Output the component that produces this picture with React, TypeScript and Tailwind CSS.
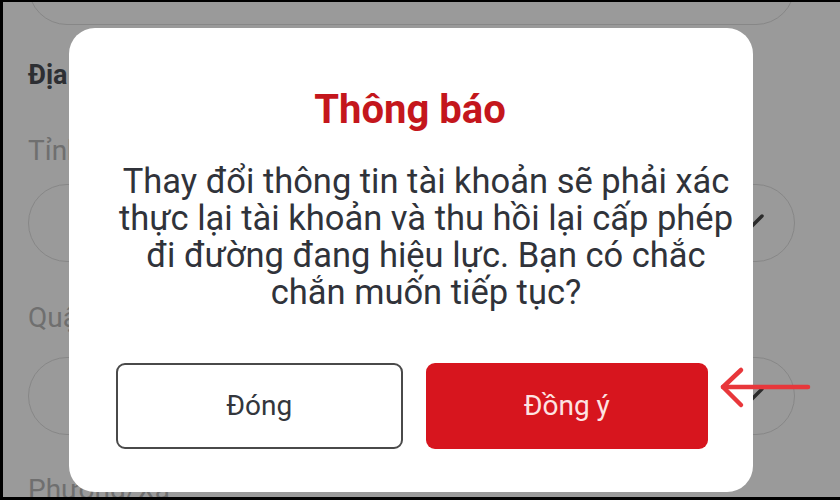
import React from "react";

function Chevron() {
  return (
    <svg width="32" height="20" viewBox="0 0 32 20" fill="none">
      <path d="M3 3 L16 16 L29 3" stroke="#2b2b2b" strokeWidth="3.5" strokeLinecap="round" strokeLinejoin="round" />
    </svg>
  );
}

export default function App() {
  return (
    <div
      className="relative w-[840px] h-[500px] overflow-hidden bg-[#9a9a9a] border-l-[3px] border-t-[2px] border-b-[3px] border-black"
      style={{ fontFamily: "Roboto, 'Noto Sans', sans-serif" }}
    >
      {/* background form (dimmed) */}
      <div className="flex flex-col pl-[25px] pr-[45px]">
        <div className="mt-[-55px] h-[78px] rounded-full border-[1.5px] border-[#878787] flex items-center justify-end pr-[90px]">
          <div className="w-[30px] h-[30px] rounded-full border-[3px] border-[#2e2e2e] mt-[-12px]" />
        </div>
        <div className="mt-[33px] text-[27px] leading-[34px] font-bold text-[#2d2f33]">Địa chỉ liên hệ</div>
        <div className="mt-[42px] text-[28px] leading-[34px] text-[#6f6f6f]">Tỉnh/Thành phố</div>
        <div className="mt-[16px] h-[78px] rounded-full border-[1.5px] border-[#878787] flex items-center justify-end pr-[29px]">
          <Chevron />
        </div>
        <div className="mt-[39px] text-[28px] leading-[34px] text-[#6f6f6f]">Quận/Huyện</div>
        <div className="mt-[22px] h-[78px] rounded-full border-[1.5px] border-[#878787] flex items-center justify-end pr-[29px]">
          <Chevron />
        </div>
        <div className="mt-[38px] text-[28px] leading-[34px] text-[#6f6f6f]">Phường/Xã</div>
      </div>

      {/* modal */}
      <div className="absolute left-[66px] top-[26px] w-[684px] h-[464px] rounded-[26px] bg-white flex flex-col pt-[59px] pl-[47px] pr-[45px] pb-[43px]">
        <div className="text-[40px] leading-[46px] font-bold text-[#c4161c] text-center ml-[-4px]">Thông báo</div>
        <div className="mt-[30px] ml-[-12px] mr-[-40px] text-[34.5px] leading-[37px] text-[#30333a] text-center">
          Thay đổi thông tin tài khoản sẽ phải xác
          <br />
          thực lại tài khoản và thu hồi lại cấp phép
          <br />
          đi đường đang hiệu lực. Bạn có chắc
          <br />
          chắn muốn tiếp tục?
        </div>
        <div className="mt-auto flex gap-[23px] w-full">
          <button className="flex-1 h-[86px] rounded-[9px] border-[2px] border-[#4a4a4a] bg-white text-[28px] text-[#33363c] flex items-center justify-center">
            Đóng
          </button>
          <button className="flex-1 h-[86px] rounded-[9px] bg-[#d7151e] text-[28px] text-[#fde3e3] flex items-center justify-center">
            Đồng ý
          </button>
        </div>
      </div>

      {/* annotation arrow */}
      <svg className="absolute left-[712px] top-[362px]" width="100" height="50" viewBox="0 0 100 50" fill="none">
        <path d="M8 23 L93 23" stroke="#e8373b" strokeWidth="4.5" strokeLinecap="round" />
        <path d="M26 6 L8 23 L26 41" stroke="#e8373b" strokeWidth="4.5" strokeLinecap="round" strokeLinejoin="round" />
      </svg>
    </div>
  );
}
